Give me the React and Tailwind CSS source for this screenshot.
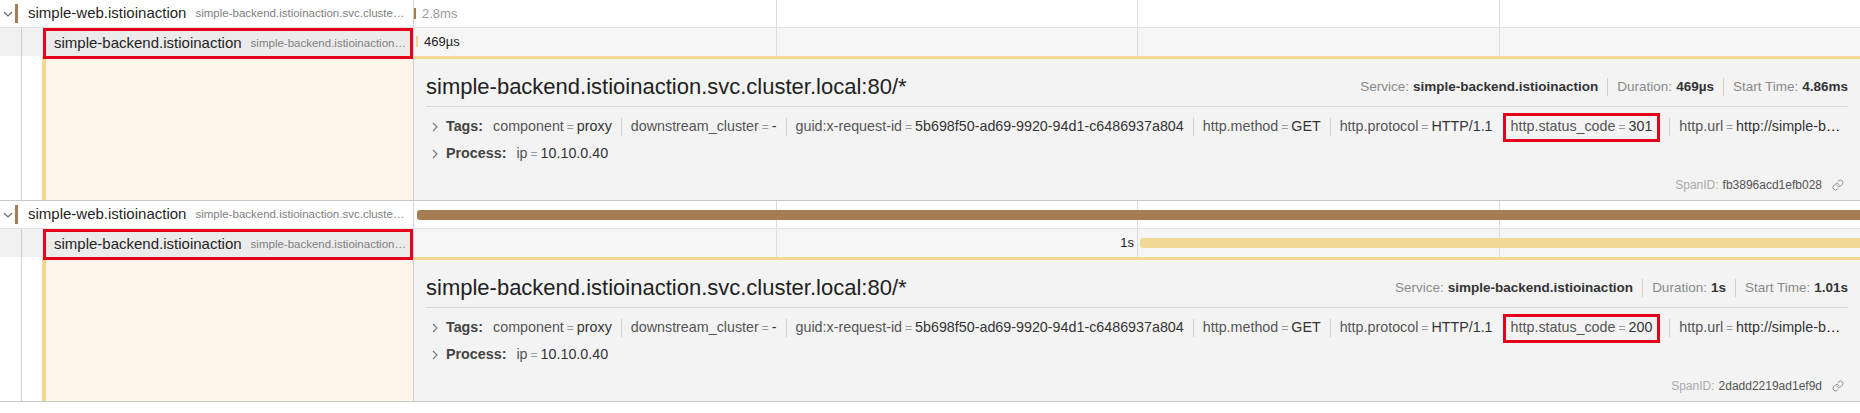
import { Link as LinkIcon } from "lucide-react";

const tagList = [
  ["component", "proxy"],
  ["downstream_cluster", "-"],
  ["guid:x-request-id", "5b698f50-ad69-9920-94d1-c6486937a804"],
  ["http.method", "GET"],
  ["http.protocol", "HTTP/1.1"],
];

function ChevronDown() {
  return (
    <svg width="10" height="6" viewBox="0 0 10 6" className="text-[#666]">
      <path d="M1 1l4 4 4-4" fill="none" stroke="currentColor" strokeWidth="1.1" />
    </svg>
  );
}

function ChevronRight() {
  return (
    <svg width="6" height="10" viewBox="0 0 6 10" className="text-[#777] shrink-0">
      <path d="M1 1l4 4-4 4" fill="none" stroke="currentColor" strokeWidth="1.1" />
    </svg>
  );
}

function Ticks() {
  return (
    <>
      <div className="absolute top-0 bottom-0 left-[25%] w-px bg-[#dcdcdc]" />
      <div className="absolute top-0 bottom-0 left-[50%] w-px bg-[#dcdcdc]" />
      <div className="absolute top-0 bottom-0 left-[75%] w-px bg-[#dcdcdc]" />
    </>
  );
}

function ParentRow({ children }) {
  return (
    <div className="flex h-[28px] bg-white border-b border-[#e2e2e2]">
      <div className="w-[414px] shrink-0 flex items-center border-r border-[#d6d6d6] pr-[8px]">
        <span className="w-[18px] flex justify-center">
          <ChevronDown />
        </span>
        <span className="w-[3px] h-[19px] bg-[#a67c52] shrink-0" />
        <span className="ml-[10px] text-[15px] text-[#1f1f1f] whitespace-nowrap">simple-web.istioinaction</span>
        <span className="ml-[9px] text-[11.5px] text-[#808080] truncate min-w-0">
          simple-backend.istioinaction.svc.cluster.local:80/*
        </span>
      </div>
      <div className="relative flex-1">
        <Ticks />
        {children}
      </div>
    </div>
  );
}

function ChildRow({ children }) {
  return (
    <div className="flex h-[28px] bg-[#f5f5f5]">
      <div className="w-[414px] shrink-0 flex bg-[#f0f0f0] border-r border-[#d6d6d6]">
        <span className="w-[22px] shrink-0 border-r border-[#cfcfcf]" />
        <span className="w-[21px] shrink-0" />
        <div className="relative z-10 flex-1 min-w-0 h-[31px] flex items-center border-[3px] border-[#e4001b] bg-[#ebebeb] pl-[8px] pr-[4px]">
          <span className="text-[15px] text-[#1f1f1f] whitespace-nowrap">simple-backend.istioinaction</span>
          <span className="ml-[9px] text-[11.5px] text-[#808080] truncate min-w-0">
            simple-backend.istioinaction.svc.cluster.local:80/*
          </span>
        </div>
      </div>
      <div className="relative flex-1">
        <Ticks />
        {children}
      </div>
    </div>
  );
}

function Sep() {
  return <span className="h-[18px] border-l border-[#cfcfcf] mx-[9px] shrink-0" />;
}

function Tag({ k, v }) {
  return (
    <span className="whitespace-nowrap shrink-0">
      <span className="text-[#555]">{k}</span>
      <span className="text-[#9a9a9a] text-[12px] mx-[3px]">=</span>
      <span className="text-[#333]">{v}</span>
    </span>
  );
}

function Detail({ duration, start, status, spanId }) {
  return (
    <div className="flex h-[145px] border-b border-[#c8c8c8]">
      <div className="w-[414px] shrink-0 flex bg-white border-r border-[#cfcfcf]">
        <span className="w-[22px] shrink-0 border-r border-[#cfcfcf]" />
        <span className="w-[20px] shrink-0" />
        <span className="w-[4px] shrink-0 bg-[#f1d791]" />
        <span className="flex-1 bg-[#fdf5ea]" />
      </div>
      <div className="flex-1 min-w-0 bg-[#f3f3f3] border-t-[3px] border-[#f1d791] pl-[12px] pr-[12px] pt-[14px]">
        <div className="flex justify-between items-start h-[34px] border-b border-[#d9d9d9]">
          <h2 className="text-[22px] leading-[28px] text-[#222]">simple-backend.istioinaction.svc.cluster.local:80/*</h2>
          <div className="flex items-center text-[13.5px] leading-[28px] whitespace-nowrap">
            <span className="text-[#8a8a8a]">Service:</span>
            <span className="ml-[4px] font-bold text-[#333]">simple-backend.istioinaction</span>
            <Sep />
            <span className="text-[#8a8a8a]">Duration:</span>
            <span className="ml-[4px] font-bold text-[#333]">{duration}</span>
            <Sep />
            <span className="text-[#8a8a8a]">Start Time:</span>
            <span className="ml-[4px] font-bold text-[#333]">{start}</span>
          </div>
        </div>

        <div className="flex items-center h-[20px] mt-[10px] text-[14.3px] pl-[6px] pr-[2px]">
          <ChevronRight />
          <span className="ml-[8px] font-bold text-[#444] shrink-0">Tags:</span>
          <span className="w-[10px] shrink-0" />
          {tagList.map(([k, v], i) => (
            <span key={k} className="flex items-center shrink-0">
              {i > 0 && <Sep />}
              <Tag k={k} v={v} />
            </span>
          ))}
          <span className="ml-[10px] h-[29px] flex items-center border-[3px] border-[#e4001b] px-[5px] shrink-0">
            <Tag k="http.status_code" v={status} />
          </span>
          <Sep />
          <span className="flex-1 min-w-0 truncate">
            <span className="text-[#555]">http.url</span>
            <span className="text-[#9a9a9a] text-[12px] mx-[3px]">=</span>
            <span className="text-[#333]">http://simple-backend.istioinaction.svc.cluster.local:80/</span>
          </span>
        </div>

        <div className="flex items-center h-[20px] mt-[7px] text-[14.3px] pl-[6px]">
          <ChevronRight />
          <span className="ml-[8px] font-bold text-[#444]">Process:</span>
          <span className="w-[10px]" />
          <Tag k="ip" v="10.10.0.40" />
        </div>

        <div className="flex justify-end items-center h-[16px] mt-[13px] text-[12px] pr-[4px]">
          <span className="text-[#aaa]">SpanID:</span>
          <span className="ml-[4px] text-[#555]">{spanId}</span>
          <LinkIcon size={12} strokeWidth={1.6} className="ml-[10px] text-[#777]" />
        </div>
      </div>
    </div>
  );
}

export default function App() {
  return (
    <div className="w-[1860px] h-[413px] overflow-hidden bg-white font-['Liberation_Sans',Arial,sans-serif]">
      <ParentRow>
        <span className="absolute left-0 top-[8px] w-[2px] h-[11px] bg-[#a67c52]" />
        <span className="absolute left-[8px] top-0 leading-[28px] text-[13px] text-[#999]">2.8ms</span>
      </ParentRow>
      <ChildRow>
        <span className="absolute left-[2px] top-[8px] w-[2px] h-[11px] bg-[#f1d791]" />
        <span className="absolute left-[10px] top-0 leading-[28px] text-[13px] text-[#222]">469µs</span>
      </ChildRow>
      <Detail duration="469µs" start="4.86ms" status="301" spanId="fb3896acd1efb028" />

      <ParentRow>
        <span className="absolute left-[3px] right-0 top-[9px] h-[10px] rounded-l-[3px] bg-[#a67c52]" />
      </ParentRow>
      <ChildRow>
        <span className="absolute left-[700px] w-[20px] top-0 leading-[28px] text-[13px] text-right text-[#222]">1s</span>
        <span className="absolute left-[726px] right-0 top-[9px] h-[10px] rounded-l-[3px] bg-[#f2d896]" />
      </ChildRow>
      <Detail duration="1s" start="1.01s" status="200" spanId="2dadd2219ad1ef9d" />
    </div>
  );
}
